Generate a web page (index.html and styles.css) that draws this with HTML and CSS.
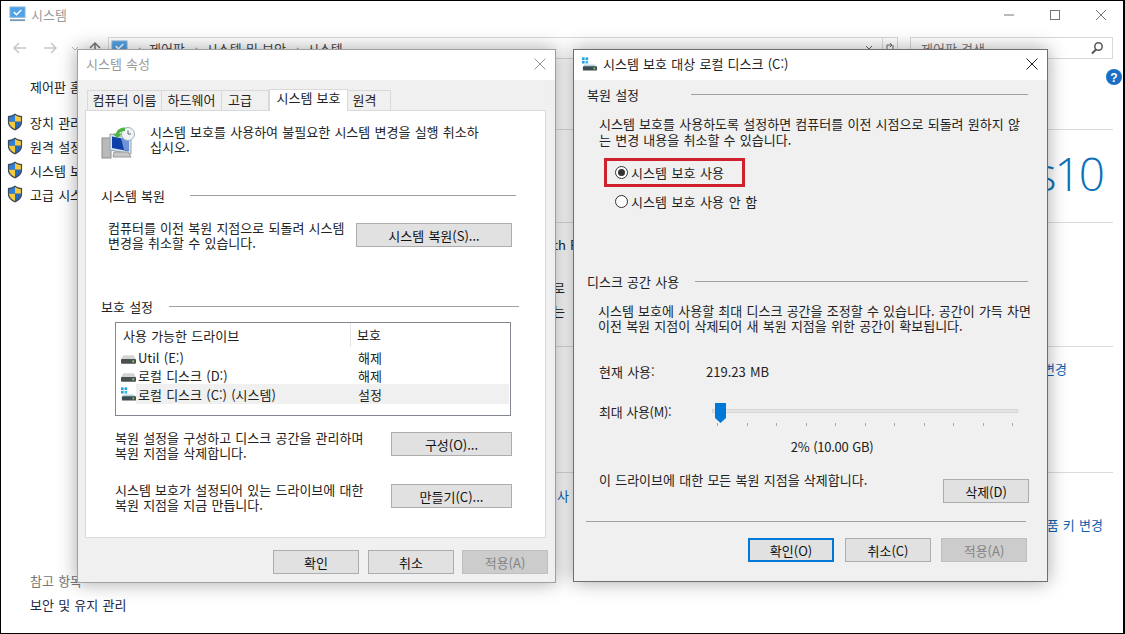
FILE: index.html
```html
<!DOCTYPE html>
<html lang="ko">
<head>
    <meta charset="UTF-8">
    <title>시스템</title>
    <link rel="stylesheet" href="styles.css">
</head>
<body>
<svg class="defs" width="0" height="0">
    <defs>
        <symbol id="shield" viewBox="0 0 16 18">
            <path d="M8 .6C6 2.2 3.6 3 .9 3.1v6.2c0 3.7 2.9 6.5 7.1 8.1 4.2-1.6 7.1-4.4 7.1-8.1V3.100C12.400 3 10 2.200 8 .6z" fill="#3d4a5c"/>
            <path d="M8 2v6.800H2.100V4.200C4.300 4 6.300 3.300 8 2z" fill="#2f7fd6"/>
            <path d="M8 2c1.700 1.300 3.700 2 5.900 2.200v4.600H8z" fill="#f6c93c"/>
            <path d="M2.100 8.800H8V16C4.600 14.600 2.300 12.300 2.100 9.300z" fill="#f6c93c"/>
            <path d="M8 8.800h5.900v.5C13.700 12.300 11.400 14.600 8 16z" fill="#2369bf"/>
        </symbol>
        <symbol id="drive" viewBox="0 0 16 10">
            <path d="M2.500 1h11L16 5.500H0z" fill="#d4d4d4"/>
            <rect x="0" y="5" width="16" height="5" rx="1" fill="#4a4f52"/>
            <rect x="12" y="6.500" width="2" height="2" fill="#7ed957"/>
        </symbol>
        <symbol id="drive-sys" viewBox="0 0 17 15">
            <rect x="0" y="0" width="3" height="3" fill="#1fa3e0"/>
            <rect x="4" y="0" width="3" height="3" fill="#1fa3e0"/>
            <rect x="0" y="4" width="3" height="3" fill="#1fa3e0"/>
            <rect x="4" y="4" width="3" height="3" fill="#38b6ea"/>
            <path d="M3 8h11l3 3H1z" fill="#b9d3dc"/>
            <rect x="1" y="10" width="16" height="5" rx="1" fill="#3c4c55"/>
            <rect x="13" y="11.500" width="2" height="2" fill="#7ed957"/>
        </symbol>
        <symbol id="pc-check" viewBox="0 0 18 18">
            <rect x="1" y="1" width="16" height="11" fill="#4ea3e8" stroke="#8fb8d8"/>
            <path d="M5 6.500l3 2.800 5-5" fill="none" stroke="#fff" stroke-width="1.600"/>
            <rect x="1" y="14" width="16" height="2" fill="#7d9bb3"/>
        </symbol>
    </defs>
</svg>

<div class="screen">
    <!-- 뒤쪽 제어판 창 -->
    <div class="back-win">
        <div class="back-title">
            <svg class="ic-16"><use href="#pc-check"/></svg>
            <span class="back-title-text">시스템</span>
            <div class="win-btns">
                <svg class="win-btn" viewBox="0 0 12 12"><path d="M1 6h10" stroke="#777"/></svg>
                <svg class="win-btn" viewBox="0 0 12 12"><rect x="1.500" y="1.500" width="9" height="9" fill="none" stroke="#777"/></svg>
                <svg class="win-btn" viewBox="0 0 12 12"><path d="M1 1l10 10M11 1L1 11" stroke="#777"/></svg>
            </div>
        </div>
        <div class="back-nav">
            <svg class="nav-arrows" viewBox="0 0 100 16">
                <path d="M7 8h12M12 3L7 8l5 5" fill="none" stroke="#c8c8c8" stroke-width="1.500"/>
                <path d="M49 8H37M44 3l5 5-5 5" fill="none" stroke="#c8c8c8" stroke-width="1.500"/>
                <path d="M65 7l3 3 3-3" fill="none" stroke="#b8b8b8"/>
                <path d="M88 14V3M83 8l5-5 5 5" fill="none" stroke="#777" stroke-width="1.500"/>
            </svg>
            <div class="addr">
                <svg class="ic-16"><use href="#pc-check"/></svg>
                <span class="crumb">›</span><span>제어판</span>
                <span class="crumb">›</span><span>시스템 및 보안</span>
                <span class="crumb">›</span><span>시스템</span>
                <svg class="addr-drop" viewBox="0 0 8 6"><path d="M1 1l3 3 3-3" fill="none" stroke="#666"/></svg>
                <div class="addr-refresh"><svg class="ic-refresh" viewBox="0 0 12 12"><path d="M3 9V3h5M6 1l2 2-2 2M9 3v6" fill="none" stroke="#666"/></svg></div>
            </div>
            <div class="search">
                <span>제어판 검색</span>
                <svg class="ic-mag" viewBox="0 0 14 14"><circle cx="8.500" cy="5.500" r="3.700" fill="none" stroke="#555" stroke-width="1.500"/><path d="M6 8.500l-4 4" stroke="#555" stroke-width="2"/></svg>
            </div>
        </div>
        <div class="back-body">
            <aside class="side">
                <div class="side-home">제어판 홈</div>
                <div class="side-item"><svg class="ic-shield"><use href="#shield"/></svg>장치 관리자</div>
                <div class="side-item"><svg class="ic-shield"><use href="#shield"/></svg>원격 설정</div>
                <div class="side-item"><svg class="ic-shield"><use href="#shield"/></svg>시스템 보호</div>
                <div class="side-item"><svg class="ic-shield"><use href="#shield"/></svg>고급 시스템 설정</div>
                <div class="side-foot">
                    <div class="side-ref">참고 항목</div>
                    <div class="side-link">보안 및 유지 관리</div>
                </div>
            </aside>
            <main class="info">
                <section class="info-sec sec-logo"><span class="logo10">s 10</span></section>
                <section class="info-sec sec-cpu">
                    <p class="frag frag-a">th R</p>
                    <p class="frag frag-b">로</p>
                    <p class="frag frag-c">는</p>
                </section>
                <section class="info-sec sec-name"><a class="link">변경</a></section>
                <section class="info-sec sec-key">
                    <p class="link frag frag-d">사</p>
                    <a class="link frag-e">품 키 변경</a>
                </section>
            </main>
        </div>
        <svg class="help" viewBox="0 0 16 16"><circle cx="8" cy="8" r="8" fill="#1a6fc4"/><text x="8" y="12.500" text-anchor="middle" class="help-q">?</text></svg>
    </div>

    <!-- 시스템 속성 대화상자 -->
    <div class="dlg dlg-props">
        <div class="dlg-title inactive">
            <span>시스템 속성</span>
            <svg class="dlg-x" viewBox="0 0 12 12"><path d="M.5.500l11 11M11.500.500l-11 11" stroke="#999"/></svg>
        </div>
        <div class="dlg-body">
            <div class="tabs">
                <div class="tab t1">컴퓨터 이름</div>
                <div class="tab t2">하드웨어</div>
                <div class="tab t3">고급</div>
                <div class="tab active">시스템 보호</div>
                <div class="tab t5">원격</div>
            </div>
            <div class="panel">
                <div class="intro">
                    <svg class="ic-protect" viewBox="0 0 34 34">
                        <rect x="1" y="12" width="9" height="20" fill="#b9b9b9" stroke="#8d8d8d"/>
                        <path d="M9 8l21 4v16L9 24z" fill="#d7e4ee" stroke="#8ea4b5"/>
                        <path d="M11 10.500l17 3.300v11.500L11 22z" fill="#0f3fa8"/>
                        <path d="M20 12l8 2v11l-5-1z" fill="#6d93d6"/>
                        <path d="M13 26h14l3 5H12z" fill="#c7c7c7" stroke="#9a9a9a"/>
                        <circle cx="27" cy="8" r="6.500" fill="#eef3f6" stroke="#9fb0bb"/>
                        <path d="M27 4.500V8h3" fill="none" stroke="#666"/>
                        <path d="M24 1.500c-5 0-8 2.500-9 6H12l4.500 5 4.500-5h-3c1-1.500 3-2.500 6-2.500z" fill="#4fb33f"/>
                    </svg>
                    <p class="txt">시스템 보호를 사용하여 불필요한 시스템 변경을 실행 취소하<br>십시오.</p>
                </div>
                <div class="sec-head sh-restore"><span>시스템 복원</span><i></i></div>
                <div class="row row-restore">
                    <p class="txt">컴퓨터를 이전 복원 지점으로 되돌려 시스템<br>변경을 취소할 수 있습니다.</p>
                    <button class="btn btn-restore">시스템 복원(S)...</button>
                </div>
                <div class="sec-head sh-protect"><span>보호 설정</span><i></i></div>
                <div class="drives">
                    <div class="drv-head"><span class="drv-name">사용 가능한 드라이브</span><span class="drv-state">보호</span></div>
                    <div class="drv"><svg class="ic-drive"><use href="#drive"/></svg><span class="drv-name">Util (E:)</span><span class="drv-state">해제</span></div>
                    <div class="drv"><svg class="ic-drive"><use href="#drive"/></svg><span class="drv-name">로컬 디스크 (D:)</span><span class="drv-state">해제</span></div>
                    <div class="drv sel"><svg class="ic-drive-sys"><use href="#drive-sys"/></svg><span class="drv-name">로컬 디스크 (C:) (시스템)</span><span class="drv-state">설정</span></div>
                </div>
                <div class="row row-config">
                    <p class="txt">복원 설정을 구성하고 디스크 공간을 관리하며<br>복원 지점을 삭제합니다.</p>
                    <button class="btn btn-mid">구성(O)...</button>
                </div>
                <div class="row row-create">
                    <p class="txt">시스템 보호가 설정되어 있는 드라이브에 대한<br>복원 지점을 지금 만듭니다.</p>
                    <button class="btn btn-mid">만들기(C)...</button>
                </div>
            </div>
            <div class="dlg-foot foot-props">
                <button class="btn btn-foot">확인</button>
                <button class="btn btn-foot">취소</button>
                <button class="btn btn-foot off">적용(A)</button>
            </div>
        </div>
    </div>

    <!-- 로컬 디스크 보호 대화상자 -->
    <div class="dlg dlg-disk">
        <div class="dlg-title">
            <svg class="ic-drive-sys title-drive"><use href="#drive-sys"/></svg>
            <span>시스템 보호 대상 로컬 디스크 (C:)</span>
            <svg class="dlg-x" viewBox="0 0 12 12"><path d="M.5.500l11 11M11.500.500l-11 11" stroke="#222"/></svg>
        </div>
        <div class="dlg-body disk-body">
            <div class="sec-head sh-set"><span>복원 설정</span><i></i></div>
            <p class="txt disk-txt p-set">시스템 보호를 사용하도록 설정하면 컴퓨터를 이전 시점으로 되돌려 원하지 않<br>는 변경 내용을 취소할 수 있습니다.</p>
            <div class="red-box">
                <span class="radio on"></span><span>시스템 보호 사용</span>
            </div>
            <div class="radio-row"><span class="radio"></span><span>시스템 보호 사용 안 함</span></div>
            <div class="sec-head sh-disk"><span>디스크 공간 사용</span><i></i></div>
            <p class="txt disk-txt p-disk">시스템 보호에 사용할 최대 디스크 공간을 조정할 수 있습니다. 공간이 가득 차면<br>이전 복원 지점이 삭제되어 새 복원 지점을 위한 공간이 확보됩니다.</p>
            <div class="usage"><span class="usage-label">현재 사용:</span><span>219.23 MB</span></div>
            <div class="usage usage-max">
                <span class="usage-label max-label">최대 사용(M):</span>
                <div class="slider">
                    <div class="track"></div>
                    <svg class="thumb" viewBox="0 0 11 20"><path d="M0 0h11v15l-5.500 5L0 15z" fill="#0078d7"/></svg>
                    <div class="ticks"><i></i><i></i><i></i><i></i><i></i><i></i><i></i><i></i><i></i><i></i><i></i></div>
                </div>
            </div>
            <div class="percent">2% (10.00 GB)</div>
            <div class="row row-del">
                <p class="txt">이 드라이브에 대한 모든 복원 지점을 삭제합니다.</p>
                <button class="btn btn-foot btn-del">삭제(D)</button>
            </div>
            <div class="rule"></div>
            <div class="dlg-foot foot-disk">
                <button class="btn btn-foot primary">확인(O)</button>
                <button class="btn btn-foot">취소(C)</button>
                <button class="btn btn-foot off">적용(A)</button>
            </div>
        </div>
    </div>
</div>
</body>
</html>
```

FILE: styles.css
```css
* {
    box-sizing: border-box;
}
body {
    margin: 0;
    font-family: "Noto Sans CJK KR", "Noto Sans", sans-serif;
    font-size: 13px;
    line-height: 15px;
    word-spacing: 0.6px;
    color: #222;
}
p {
    margin: 0;
}
.defs {
    position: absolute;
}
.screen {
    position: relative;
    width: 1125px;
    height: 634px;
    border: 1px solid #000;
    border-right-width: 2px;
    background: #fff;
    overflow: hidden;
}

/* 뒤쪽 창 */
.back-win {
    height: 100%;
    display: flex;
    flex-direction: column;
}
.back-title {
    display: flex;
    align-items: center;
    height: 30px;
    padding: 0 0 3px 8px;
    flex: none;
}
.ic-16 {
    width: 17px;
    height: 17px;
    flex: none;
}
.back-title-text {
    margin-left: 5px;
    color: #999;
}
.win-btns {
    margin-left: auto;
    display: flex;
    gap: 34px;
    padding-right: 16px;
}
.win-btn {
    width: 12px;
    height: 12px;
}
.back-nav {
    display: flex;
    height: 22px;
    margin-top: 6px;
    flex: none;
    align-items: center;
}
.nav-arrows {
    width: 100px;
    height: 16px;
    margin-left: 6px;
    flex: none;
}
.addr {
    width: 790px;
    height: 22px;
    margin-left: 1px;
    border: 1px solid #d9d9d9;
    display: flex;
    align-items: center;
    gap: 7px;
    padding-left: 2px;
    color: #444;
}
.crumb {
    color: #777;
    margin-left: 3px;
}
.addr-drop {
    width: 8px;
    height: 6px;
    margin-left: auto;
    margin-right: 2px;
}
.addr-refresh {
    width: 15px;
    height: 100%;
    border-left: 1px solid #d9d9d9;
    flex: none;
    display: flex;
    align-items: center;
    justify-content: center;
}
.ic-refresh {
    width: 12px;
    height: 12px;
}
.search {
    width: 203px;
    height: 22px;
    margin-left: 12px;
    border: 1px solid #d9d9d9;
    display: flex;
    align-items: center;
    justify-content: space-between;
    padding: 0 8px 0 10px;
    color: #777;
}
.ic-mag {
    width: 14px;
    height: 14px;
}
.back-body {
    flex: 1;
    display: flex;
    min-height: 0;
}
.side {
    width: 552px;
    flex: none;
    padding-left: 6px;
    display: flex;
    flex-direction: column;
}
.side-home {
    margin: 20px 0 16px 23px;
}
.side-item {
    display: flex;
    align-items: center;
    height: 24px;
    gap: 7px;
}
.ic-shield {
    width: 16px;
    height: 18px;
    flex: none;
}
.side-foot {
    margin-top: auto;
    padding: 0 0 21px 23px;
}
.side-ref {
    color: #777;
    margin-bottom: 9px;
}
.side-link {
    color: #1c2a4a;
}
.info {
    flex: 1;
    margin-right: 10px;
    margin-top: 70px;
}
.info-sec {
    border-top: 1px solid #dcdcdc;
    position: relative;
}
.sec-logo {
    height: 93px;
    text-align: right;
    padding: 13px 10px 0 0;
}
.logo10 {
    display: inline-block;
    font-family: "Open Sans", sans-serif;
    font-weight: 300;
    font-size: 46px;
    line-height: 60px;
    letter-spacing: -2px;
    word-spacing: -10px;
    color: #0f72b8;
}
.sec-cpu {
    height: 124px;
}
.frag {
    width: fit-content;
}
.frag-a {
    padding-top: 14px;
}
.frag-b {
    padding-top: 28px;
}
.frag-c {
    padding-top: 8px;
}
.sec-name {
    height: 126px;
    text-align: right;
    padding: 14px 46px 0 0;
}
.link {
    color: #0a62b0;
}
.sec-key {
    padding-top: 15px;
    text-align: right;
}
.frag-d {
    text-align: left;
    margin-left: 4px;
}
.frag-e {
    display: block;
    margin-top: 14px;
    padding-right: 10px;
}
.help {
    position: absolute;
    left: 1105px;
    top: 68px;
    width: 16px;
    height: 16px;
}
.help-q {
    font-family: "Liberation Sans", sans-serif;
    font-size: 12px;
    font-weight: 700;
    fill: #fff;
}

/* 대화상자 */
.dlg {
    position: absolute;
    display: flex;
    flex-direction: column;
    border: 1px solid #6f6f6f;
    background: #f0f0f0;
    box-shadow: 0 0 18px rgba(0, 0, 0, 0.35);
}
.dlg-props {
    left: 76px;
    top: 48px;
    width: 479px;
    height: 534px;
    border-color: #a0a0a0;
}
.dlg-disk {
    left: 572px;
    top: 48px;
    width: 475px;
    height: 533px;
}
.dlg-title {
    height: 30px;
    flex: none;
    background: #fff;
    display: flex;
    align-items: center;
    padding: 0 0 3px 8px;
    position: relative;
}
.dlg-title.inactive {
    color: #999;
}
.dlg-x {
    position: absolute;
    right: 9px;
    top: 8px;
    width: 12px;
    height: 12px;
}
.title-drive {
    margin-right: 6px;
}
.dlg-body {
    flex: 1;
    padding: 10px 9px 0 7px;
}

/* 탭 */
.tabs {
    display: flex;
    height: 20px;
    align-items: flex-end;
    padding-left: 2px;
}
.tab {
    height: 20px;
    background: #f0f0f0;
    border: 1px solid #d9d9d9;
    border-bottom: 0;
    border-left: 0;
    text-align: center;
    line-height: 17px;
    flex: none;
}
.t1 {
    width: 75px;
    border-left: 1px solid #d9d9d9;
}
.t2 {
    width: 60px;
}
.t3 {
    width: 47px;
    padding-right: 10px;
}
.t5 {
    width: 44px;
    padding-right: 8px;
}
.tab.active {
    width: 79px;
    height: 22px;
    background: #fff;
    border-left: 1px solid #d9d9d9;
    margin-right: -1px;
    margin-bottom: -1px;
    position: relative;
    z-index: 1;
    line-height: 16px;
}
.panel {
    height: 428px;
    width: 461px;
    background: #fff;
    border: 1px solid #d9d9d9;
    padding: 15px 26px 0 15px;
}
.intro {
    display: flex;
    gap: 15px;
    align-items: flex-start;
}
.ic-protect {
    width: 34px;
    height: 34px;
    flex: none;
}
.intro .txt {
    margin-top: -2px;
}
.sec-head {
    display: flex;
    align-items: center;
    gap: 25px;
}
.sec-head i {
    flex: 1;
    height: 1px;
    background: #a0a0a0;
}
.sh-restore {
    margin-top: 28px;
    margin-right: 3px;
}
.row {
    display: flex;
    justify-content: space-between;
}
.btn {
    height: 24px;
    padding: 0;
    font: inherit;
    word-spacing: inherit;
    color: #111;
    background: #e1e1e1;
    border: 1px solid #adadad;
    flex: none;
}
.row-restore {
    margin: 17px 7px 0 7px;
}
.row-restore .btn,
.row-config .btn,
.row-create .btn {
    margin-top: 2px;
}
.row-restore .btn {
    margin-top: 3px;
}
.btn-restore {
    width: 156px;
}
.sh-protect {
    margin-top: 49px;
    gap: 16px;
}
.drives {
    width: 396px;
    height: 94px;
    margin: 8px 0 0 14px;
    border: 1px solid #828790;
}
.drv-head {
    display: flex;
    height: 24px;
    align-items: center;
    margin-bottom: 1px;
}
.drv-head .drv-name {
    width: 234px;
    padding-left: 7px;
}
.drv-head .drv-state {
    border-left: 1px solid #e5e5e5;
    padding-left: 6px;
    height: 24px;
    line-height: 24px;
}
.drv {
    display: flex;
    align-items: center;
    height: 18px;
    margin-left: 5px;
    position: relative;
}
.drv .drv-name {
    width: 222px;
    padding-left: 2px;
}
.drv.sel {
    height: 20px;
    background: linear-gradient(90deg, #fff 15px, #f0f0f0 15px);
    margin-right: 1px;
}
.ic-drive {
    width: 15px;
    height: 10px;
    margin-top: 3px;
    flex: none;
}
.ic-drive-sys {
    width: 15px;
    height: 14px;
    flex: none;
}
.row-config {
    margin: 14px 7px 0 14px;
}
.row-create {
    margin: 22px 7px 0 14px;
}
.btn-mid {
    width: 121px;
}
.dlg-foot {
    display: flex;
}
.foot-props {
    justify-content: flex-end;
    gap: 9px;
    margin-top: 12px;
    margin-right: -2px;
}
.foot-props .off {
    margin-left: -1px;
}
.btn-foot {
    width: 86px;
}
.btn.off {
    background: #cccccc;
    border-color: #bfbfbf;
    color: #838383;
}
.btn.primary {
    border: 2px solid #0078d7;
    margin-right: 1px;
}

/* 로컬 디스크 창 */
.disk-body {
    padding: 7px 19px 0 13px;
}
.sh-set {
    gap: 0;
    justify-content: space-between;
}
.sh-set i {
    flex: none;
    width: 337px;
}
.disk-txt {
    margin-left: 12px;
    white-space: nowrap;
}
.p-set {
    margin-top: 14px;
    line-height: 16px;
}
.red-box {
    width: 141px;
    height: 29px;
    margin: 10px 0 0 17px;
    border: 3px solid #d0202e;
    display: flex;
    align-items: center;
    padding-left: 8px;
    gap: 3px;
    word-spacing: 1px;
}
.radio {
    width: 13px;
    height: 13px;
    border: 1px solid #333;
    border-radius: 50%;
    background: #fff;
    flex: none;
    position: relative;
}
.radio.on::after {
    content: "";
    position: absolute;
    left: 2px;
    top: 2px;
    width: 7px;
    height: 7px;
    border-radius: 50%;
    background: #333;
}
.radio-row {
    display: flex;
    align-items: center;
    gap: 3px;
    height: 15px;
    margin: 7px 0 0 28px;
    word-spacing: 1px;
}
.sh-disk {
    margin-top: 65px;
    gap: 16px;
}
.p-disk {
    margin-top: 14px;
    margin-left: 11px;
}
.usage {
    display: flex;
    margin: 31px 0 0 12px;
}
.usage-label {
    width: 107px;
    flex: none;
}
.usage-max {
    margin-top: 25px;
}
.usage-label.max-label {
    width: 115px;
    letter-spacing: -0.3px;
}
.slider {
    position: relative;
    width: 304px;
    height: 22px;
    margin-top: -2px;
}
.track {
    position: absolute;
    left: -2px;
    right: 0;
    top: 7px;
    height: 4px;
    background: #e3e3e3;
    border: 1px solid #d6d6d6;
}
.thumb {
    position: absolute;
    left: 1px;
    top: 1px;
    width: 11px;
    height: 20px;
}
.ticks {
    position: absolute;
    left: 3px;
    right: 5px;
    top: 21px;
    display: flex;
    justify-content: space-between;
}
.ticks i {
    width: 1px;
    height: 3px;
    background: #a8a8a8;
}
.percent {
    text-align: center;
    margin: 15px 0 0 49px;
    letter-spacing: -0.3px;
}
.row-del {
    margin: 18px -1px 0 12px;
    height: 42px;
}
.btn-del {
    margin-top: 7px;
}
.rule {
    height: 1px;
    background: #a0a0a0;
    margin: 7px 2px 0 -1px;
}
.foot-disk {
    justify-content: flex-end;
    gap: 10px;
    margin: 16px 1px 0 0;
}
```
